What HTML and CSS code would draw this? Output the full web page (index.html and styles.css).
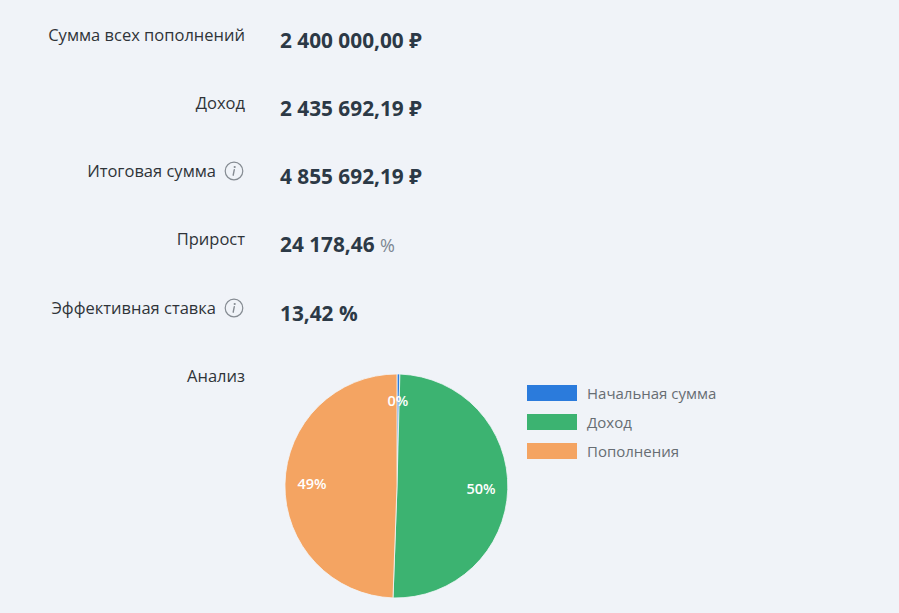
FILE: index.html
```html
<!DOCTYPE html>
<html lang="ru">
<head>
<meta charset="utf-8">
<title>Результаты</title>
<link rel="stylesheet" href="styles.css">
</head>
<body>
<div class="results">
  <div class="label">Сумма всех пополнений</div>
  <div class="value">2 400 000,00 ₽</div>

  <div class="label">Доход</div>
  <div class="value">2 435 692,19 ₽</div>

  <div class="label">Итоговая сумма
    <svg class="info" width="20" height="20" viewBox="0 0 20 20"><circle cx="10" cy="10" r="8.8" fill="none" stroke="#858b92" stroke-width="1.2"/><circle cx="10.7" cy="6" r="1.1" fill="#858b92"/><path d="M10.3 8.6 L9.2 14.2" stroke="#858b92" stroke-width="1.4" stroke-linecap="round"/></svg>
  </div>
  <div class="value">4 855 692,19 ₽</div>

  <div class="label">Прирост</div>
  <div class="value">24 178,46 <span class="unit">%</span></div>

  <div class="label">Эффективная ставка
    <svg class="info" width="20" height="20" viewBox="0 0 20 20"><circle cx="10" cy="10" r="8.8" fill="none" stroke="#858b92" stroke-width="1.2"/><circle cx="10.7" cy="6" r="1.1" fill="#858b92"/><path d="M10.3 8.6 L9.2 14.2" stroke="#858b92" stroke-width="1.4" stroke-linecap="round"/></svg>
  </div>
  <div class="value">13,42 %</div>

  <div class="label">Анализ</div>
  <div class="chart">
    <svg class="pie" width="240" height="236" viewBox="0 0 240 236">
      <path d="M117 120 L117 8 A112 112 0 0 1 119.89 8.04 Z" fill="#2b7bdc" stroke="#f4f6fa" stroke-width="0.8"/>
      <path d="M117 120 L119.89 8.04 A112 112 0 0 1 112.99 231.93 Z" fill="#3cb371" stroke="#f4f6fa" stroke-width="0.8"/>
      <path d="M117 120 L112.99 231.93 A112 112 0 0 1 117 8 Z" fill="#f4a462" stroke="#f4f6fa" stroke-width="0.8"/>
      <text class="pct" x="118" y="34">0%</text>
      <text class="pct" x="201" y="122">50%</text>
      <text class="pct" x="32" y="117">49%</text>
    </svg>
    <ul class="legend">
      <li><span class="swatch blue"></span>Начальная сумма</li>
      <li><span class="swatch green"></span>Доход</li>
      <li><span class="swatch orange"></span>Пополнения</li>
    </ul>
  </div>
</div>
</body>
</html>
```
FILE: styles.css
```css
html, body {
  margin: 0;
  padding: 0;
  background: #f0f3f8;
}
body {
  font-family: "Open Sans", "Noto Sans", "DejaVu Sans", sans-serif;
  width: 899px;
  height: 613px;
  overflow: hidden;
}
.results {
  display: grid;
  grid-template-columns: 245px 1fr;
  column-gap: 35px;
  row-gap: 39px;
  align-items: start;
  padding-top: 23px;
}
.label {
  font-size: 16.5px;
  line-height: 24px;
  color: #2f3338;
  text-align: right;
  display: flex;
  justify-content: flex-end;
  align-items: center;
  gap: 8px;
  white-space: nowrap;
}
.info {
  display: block;
  margin-right: 1px;
}
.value {
  font-size: 20.8px;
  line-height: 24px;
  font-weight: 700;
  color: #2c3946;
  padding-top: 5px;
  white-space: nowrap;
}
.unit {
  font-weight: 400;
  color: #7c8792;
  font-size: 18px;
}
.chart {
  display: flex;
  align-items: flex-start;
  margin-top: -1px;
}
.pie {
  display: block;
  margin-top: 3px;
}
.pct {
  fill: #ffffff;
  font-size: 14.5px;
  font-weight: 600;
  text-anchor: middle;
  dominant-baseline: central;
  font-family: "Open Sans", "Noto Sans", sans-serif;
}
.legend {
  list-style: none;
  margin: 19px 0 0 7px;
  padding: 0;
  display: flex;
  flex-direction: column;
  gap: 7px;
}
.legend li {
  display: flex;
  align-items: center;
  gap: 10px;
  font-size: 15px;
  line-height: 22px;
  color: #676d73;
}
.swatch {
  width: 50px;
  height: 16px;
  display: inline-block;
}
.blue { background: #2b7bdc; }
.green { background: #3cb371; }
.orange { background: #f4a462; }
```
